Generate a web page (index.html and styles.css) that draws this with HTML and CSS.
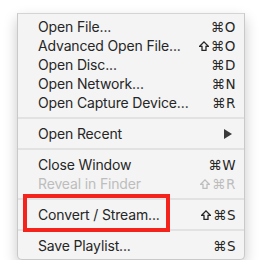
FILE: index.html
```html
<!DOCTYPE html>
<html>
<head>
<meta charset="utf-8">
<link rel="stylesheet" href="styles.css">
</head>
<body>
<div class="menu">
  <div class="item"><span class="label">Open File...</span><span class="key">⌘O</span></div>
  <div class="item"><span class="label">Advanced Open File...</span><span class="key"><svg class="shift" viewBox="0 0 10 10"><path d="M5 0.9 L9.3 5.3 H7 V9.3 H3 V5.3 H0.7 Z"/></svg>⌘O</span></div>
  <div class="item"><span class="label">Open Disc...</span><span class="key">⌘D</span></div>
  <div class="item"><span class="label">Open Network...</span><span class="key">⌘N</span></div>
  <div class="item"><span class="label">Open Capture Device...</span><span class="key">⌘R</span></div>
  <div class="sep"></div>
  <div class="item"><span class="label">Open Recent</span><span class="arrow"></span></div>
  <div class="sep"></div>
  <div class="item"><span class="label">Close Window</span><span class="key">⌘W</span></div>
  <div class="item disabled"><span class="label">Reveal in Finder</span><span class="key"><svg class="shift" viewBox="0 0 10 10"><path d="M5 0.9 L9.3 5.3 H7 V9.3 H3 V5.3 H0.7 Z"/></svg>⌘R</span></div>
  <div class="sep"></div>
  <div class="item highlight"><span class="label">Convert / Stream...</span><span class="key"><svg class="shift" viewBox="0 0 10 10"><path d="M5 0.9 L9.3 5.3 H7 V9.3 H3 V5.3 H0.7 Z"/></svg>⌘S</span><span class="mark"></span></div>
  <div class="sep"></div>
  <div class="item"><span class="label">Save Playlist...</span><span class="key">⌘S</span></div>
</div>
</body>
</html>
```
FILE: styles.css
```css
html, body {
  margin: 0;
  padding: 0;
  background: #ffffff;
}
body {
  padding: 13px 16px 0 17px;
  font-family: "Inter", "Liberation Sans", sans-serif;
}
.menu {
  width: 226px;
  background: #f4f4f4;
  border: 1px solid #c9c9c9;
  border-top-color: #d4d4d4;
  border-radius: 0 0 5px 5px;
  box-shadow: 0 6px 14px rgba(0, 0, 0, 0.22);
  padding: 3px 0 4px;
}
.item {
  position: relative;
  display: flex;
  align-items: center;
  justify-content: space-between;
  height: 19px;
  padding: 0 8px 0 20px;
  font-size: 14px;
  color: #262626;
}
.label {
  letter-spacing: -0.15px;
}
.key {
  display: flex;
  align-items: center;
  font-family: "DejaVu Sans", sans-serif;
  font-size: 13.5px;
  letter-spacing: 0.5px;
}
.shift {
  width: 10px;
  height: 10px;
  margin-right: 2px;
  fill: none;
  stroke: currentColor;
  stroke-width: 1.3;
  stroke-linejoin: miter;
}
.disabled {
  color: #bdbdbd;
}
.arrow {
  width: 0;
  height: 0;
  border-left: 8px solid #3a3a3a;
  border-top: 5px solid transparent;
  border-bottom: 5px solid transparent;
  margin-right: 4px;
}
.sep {
  height: 2px;
  background: #e2e2e2;
  margin: 5px 0 5px;
}
.mark {
  position: absolute;
  left: 5px;
  top: -11px;
  width: 139px;
  height: 30px;
  border: 4px solid #f4231c;
}
```
